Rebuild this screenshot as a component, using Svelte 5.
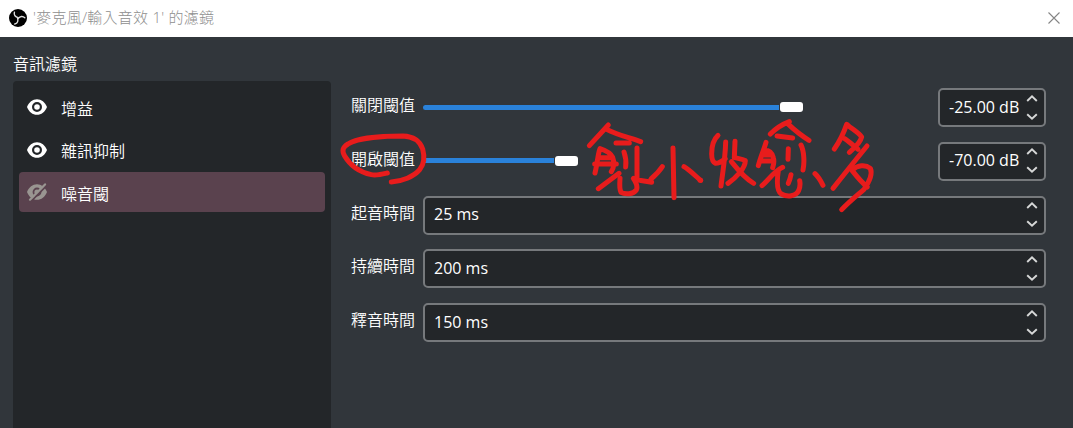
<script>
  const filters = [
    { name: '增益', on: true },
    { name: '雜訊抑制', on: true },
    { name: '噪音閾', on: false, selected: true }
  ];
  const params = [
    { label: '關閉閾值', value: '-25.00 dB', pos: 369 },
    { label: '開啟閾值', value: '-70.00 dB', pos: 144 },
    { label: '起音時間', value: '25 ms' },
    { label: '持續時間', value: '200 ms' },
    { label: '釋音時間', value: '150 ms' }
  ];
</script>

<div class="window">
  <header>
    <svg class="logo" viewBox="0 0 18 18">
      <circle cx="9" cy="9" r="9" fill="#000" />
      <g fill="none" stroke="#dedede" stroke-width="1.4" stroke-linecap="round">
        {#each [0, 120, 240] as angle}
          <path d="M9.2 8.6C6.4 8 4.6 6.2 5.4 3.2" transform="rotate({angle} 9 9)" />
        {/each}
      </g>
    </svg>
    <span class="title">'麥克風/輸入音效 1' 的濾鏡</span>
    <svg class="close" viewBox="0 0 12 12"><path d="M.5 .5L11.5 11.5M11.5 .5L.5 11.5" stroke="#858585" stroke-width="1.1" /></svg>
  </header>
  <main>
    <section class="side">
      <h1>音訊濾鏡</h1>
      <ul>
        {#each filters as f}
          <li class:selected={f.selected}>
            <svg class="eye" viewBox="0 0 20 18">
              {#if f.on}
                <path fill="#fff" fill-rule="evenodd" d="M0 9C2 4 5.6 1.2 10 1.2S18 4 20 9C18 14 14.4 16.8 10 16.8S2 14 0 9ZM10 4A5 5 0 1 0 10 14A5 5 0 1 0 10 4Z" />
                <circle cx="10" cy="9" r="2.8" fill="#fff" />
              {:else}
                <path fill="#999591" fill-rule="evenodd" d="M0 9C2 4 5.6 1.2 10 1.2S18 4 20 9C18 14 14.4 16.8 10 16.8S2 14 0 9ZM10 4.6A4.4 4.4 0 1 0 10 13.4A4.4 4.4 0 1 0 10 4.6Z" />
                <circle cx="10" cy="9" r="2.6" fill="#999591" />
                <path d="M4.4 17.8L19.4 2.6" stroke="#5a424e" stroke-width="2" />
                <path d="M3 16.7L18 1.4" stroke="#999591" stroke-width="2.2" stroke-linecap="round" />
              {/if}
            </svg>
            <span>{f.name}</span>
          </li>
        {/each}
      </ul>
    </section>
    <section class="params">
      {#each params as p}
        <div class="row">
          <label>{p.label}</label>
          {#if p.pos}
            <div class="slider">
              <div class="fill" style="width: {p.pos - 13}px"></div>
              <div class="thumb"></div>
            </div>
          {/if}
          <div class="spin" class:wide={!p.pos}>
            <span>{p.value}</span>
            <svg viewBox="0 0 12 28" fill="none" stroke="#d6d7d7" stroke-width="1.9">
              <path d="M1.2 7L6 2.4L10.8 7M1.2 20.2L6 24.8L10.8 20.2" />
            </svg>
          </div>
        </div>
      {/each}
    </section>
  </main>
  <svg class="ink" viewBox="0 0 1073 428" fill="none" stroke="#e81c1c" stroke-linecap="round" stroke-linejoin="round">
    <g transform="translate(340 80) scale(.33333)" stroke-width="15">
      <path d="M142 279C125 283 109 287 94 284C61 277 31 257 14 228C4 211 9 201 24 192C53 172 142 168 189 168C219 169 240 184 248 207C254 229 253 252 239 269C222 290 185 304 154 306" />
    </g>
    <g transform="translate(580 115) scale(.33333)" stroke-width="15">
      <path d="M28 92L85 30M80 43C110 59 145 67 182 80M108 84H148M45 174C52 148 53 119 60 101C75 106 91 112 98 127C104 144 101 159 94 170M60 128H92M44 147H109M132 111C137 125 139 142 137 156M171 99V190M55 221L117 175M120 190C119 204 119 225 123 232C135 239 160 238 169 225C174 217 168 200 160 190C177 196 196 200 215 202M213 192C226 181 238 169 247 155M279 99L282 248M312 155C329 165 345 182 362 196" />
    </g>
    <g transform="translate(700 120) scale(.33333)" stroke-width="15">
      <path d="M54 46C42 57 35 78 35 101C35 117 39 127 47 130C58 130 67 123 76 116M77 66C76 114 68 157 63 198M105 64L103 112M103 113C116 116 127 116 136 122C136 145 106 175 84 190M94 125C114 150 137 177 161 190M0 181H2" />
      <path d="M211 42C229 24 247 13 268 5M263 11C282 29 304 47 327 61M231 48L278 54M175 137C182 110 193 86 198 67M194 91C207 91 216 98 220 113C224 125 221 133 218 143M192 105H209M187 123H218M265 86L264 118M303 75C312 92 314 128 309 150M186 197C207 179 222 154 248 142M235 152C231 178 229 211 244 222C262 232 288 229 296 212C300 202 301 191 299 182M273 164C271 175 268 183 265 190M345 161C356 171 363 184 369 196" />
      <path d="M440 13C431 39 419 64 403 87M442 14C455 27 472 34 485 51C481 69 464 83 448 97M434 56C448 65 461 78 474 88M501 78C466 121 433 162 399 205M456 150C474 135 496 133 511 145C519 164 507 187 492 208C469 228 446 246 425 269M456 151C471 170 486 188 502 201" />
    </g>
  </svg>
</div>

<style>
  :global(body) { background: #31363b; }
  .window {
    position: relative;
    height: 428px;
    overflow: hidden;
    display: flex;
    flex-direction: column;
    background: #31363b;
    color: #fff;
    font-family: "Open Sans", "Noto Sans CJK TC", sans-serif;
    font-size: 16px;
  }
  header {
    height: 37px;
    flex: none;
    box-sizing: border-box;
    padding: 0 13px 1px 9px;
    display: flex;
    align-items: center;
    background: #fff;
    color: #8e8e8e;
  }
  .logo { width: 18px; height: 18px; }
  .title {
    margin-left: 6px;
    flex: 1;
    font: 300 15px/34px "Open Sans", "Noto Sans CJK TC", sans-serif;
    height: 36px;
    letter-spacing: .25px;
  }
  .close { width: 12px; height: 12px; }
  main { flex: 1; display: flex; padding-left: 13px; }
  .side { width: 318px; display: flex; flex-direction: column; }
  h1 { margin: 0; padding-top: 15px; height: 29px; font-size: 16px; font-weight: 350; line-height: 24px; }
  ul {
    list-style: none;
    margin: 0;
    padding: 6px 6px 0;
    flex: 1;
    background: #232629;
    border-radius: 4px 4px 0 0;
  }
  li {
    height: 40px;
    margin-bottom: 2.5px;
    padding-left: 8px;
    display: flex;
    align-items: center;
    border-radius: 4px;
    font-weight: 350;
  }
  li.selected { background: #5a424e; }
  li span { margin-left: 14px; padding-top: 1px; }
  .eye { width: 20px; height: 18px; }
  .params {
    flex: 1;
    padding: 51px 27px 0 19px;
    display: flex;
    flex-direction: column;
    gap: 14.8px;
  }
  .row { height: 39px; display: flex; align-items: center; }
  label { box-sizing: border-box; width: 73px; padding-left: 1px; font-weight: 350; line-height: 35px; height: 39px; }
  .slider { flex: 1; display: flex; align-items: center; padding-bottom: 1px; }
  .fill { height: 5px; margin-right: 1px; border-radius: 3px 0 0 3px; background: #2a82da; }
  .thumb { width: 23px; height: 10px; border-radius: 3px; background: #fff; }
  .spin {
    width: 108px;
    height: 39px;
    box-sizing: border-box;
    border: 2px solid #76797c;
    border-radius: 5px;
    padding: 0 6px 0 9px;
    display: flex;
    align-items: center;
    justify-content: space-between;
    background: #232629;
    white-space: nowrap;
  }
  .spin span { padding-bottom: 2px; }
  .spin.wide { width: auto; flex: 1; }
  .spin svg { width: 12px; height: 28px; }
  .ink { position: absolute; left: 0; top: 0; width: 1073px; height: 428px; }
</style>
